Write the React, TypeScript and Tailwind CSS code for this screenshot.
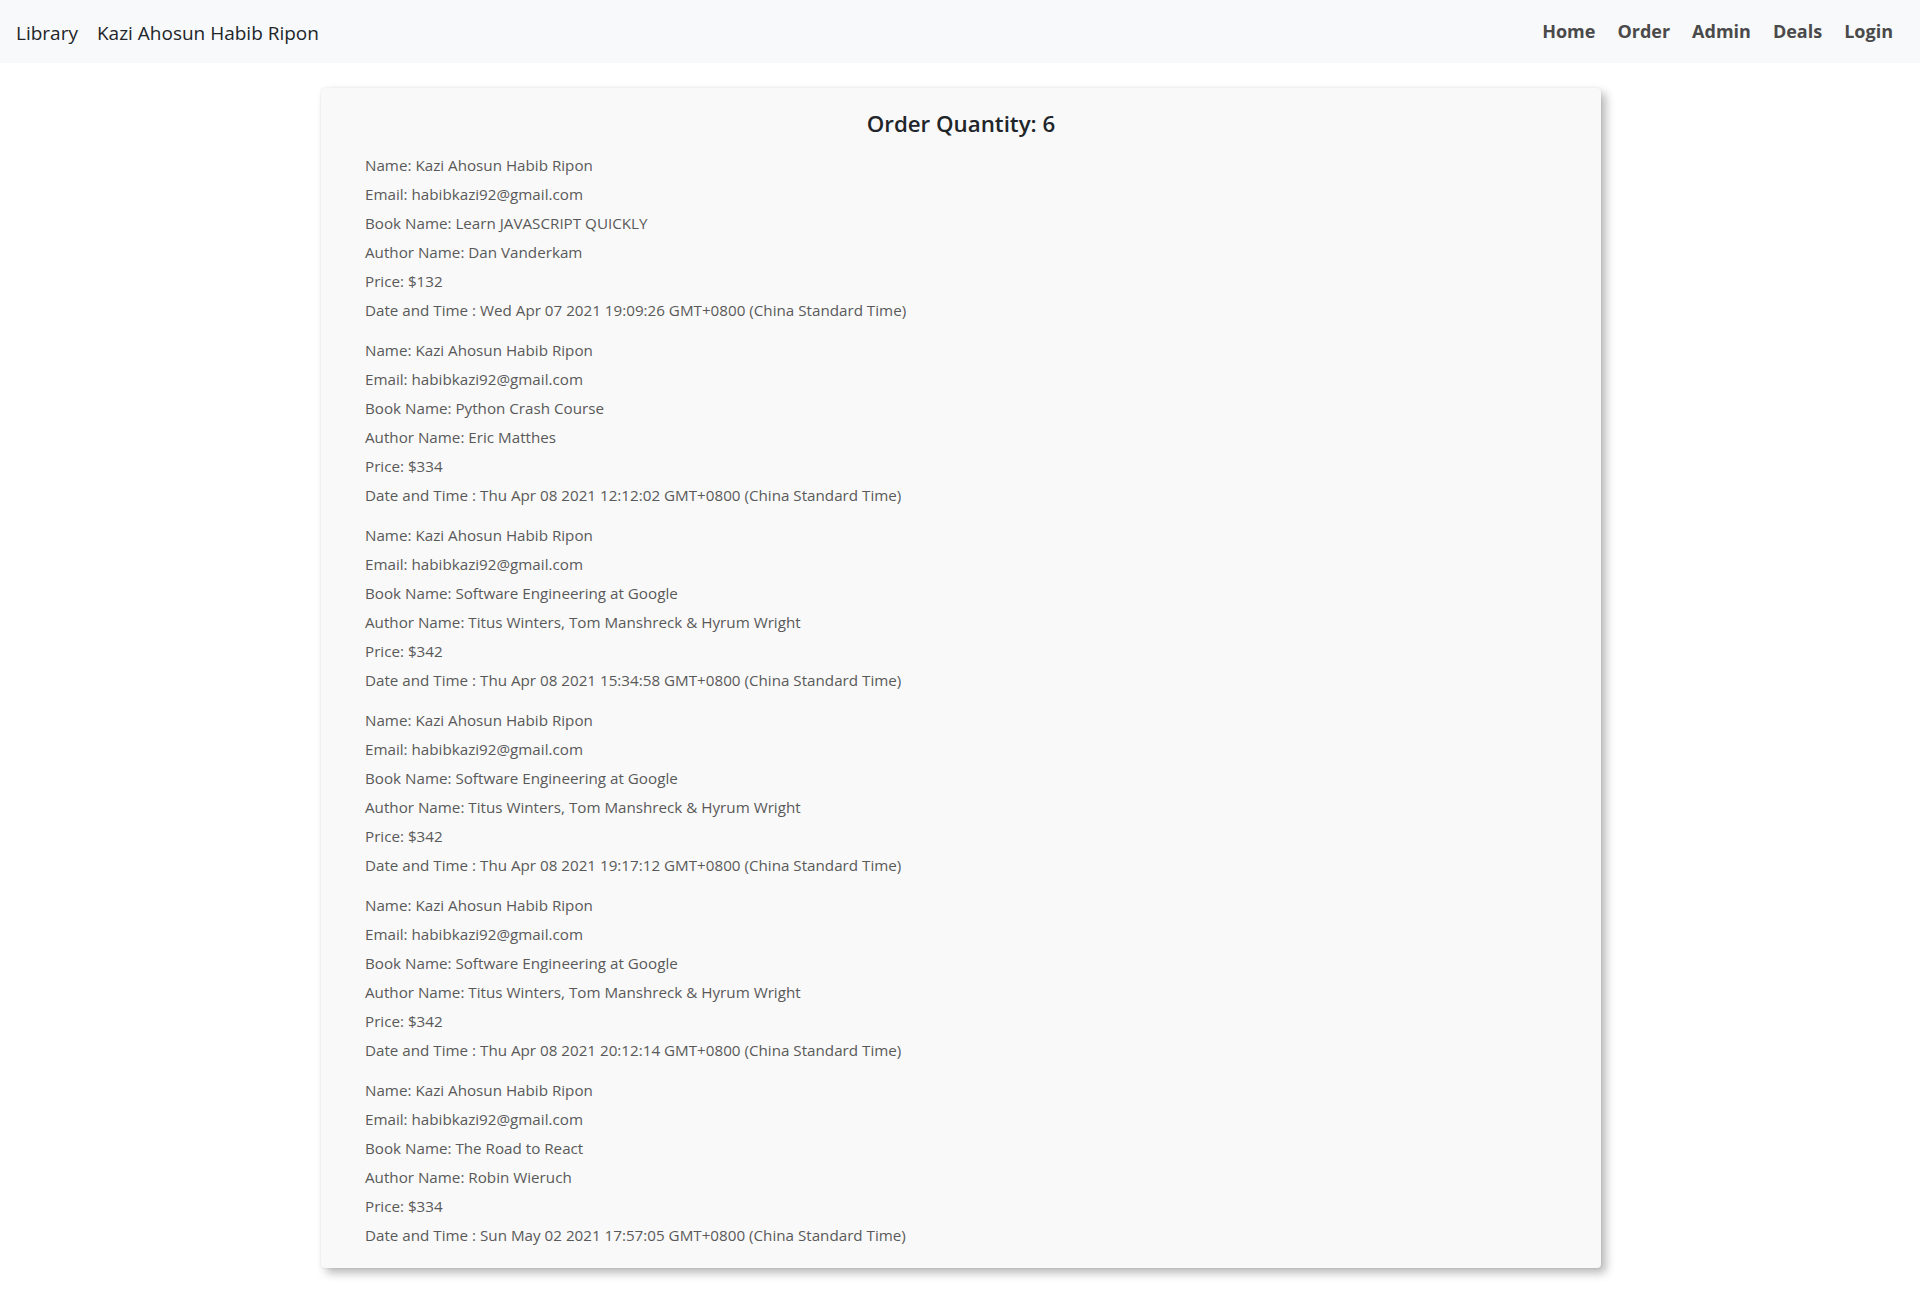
import React from "react";

const orders = [
  { book: "Learn JAVASCRIPT QUICKLY", author: "Dan Vanderkam", price: 132, date: "Wed Apr 07 2021 19:09:26 GMT+0800 (China Standard Time)" },
  { book: "Python Crash Course", author: "Eric Matthes", price: 334, date: "Thu Apr 08 2021 12:12:02 GMT+0800 (China Standard Time)" },
  { book: "Software Engineering at Google", author: "Titus Winters, Tom Manshreck & Hyrum Wright", price: 342, date: "Thu Apr 08 2021 15:34:58 GMT+0800 (China Standard Time)" },
  { book: "Software Engineering at Google", author: "Titus Winters, Tom Manshreck & Hyrum Wright", price: 342, date: "Thu Apr 08 2021 19:17:12 GMT+0800 (China Standard Time)" },
  { book: "Software Engineering at Google", author: "Titus Winters, Tom Manshreck & Hyrum Wright", price: 342, date: "Thu Apr 08 2021 20:12:14 GMT+0800 (China Standard Time)" },
  { book: "The Road to React", author: "Robin Wieruch", price: 334, date: "Sun May 02 2021 17:57:05 GMT+0800 (China Standard Time)" },
];

export default function App() {
  return (
    <div className="min-h-[1293px] bg-white" style={{ fontFamily: '"Open Sans", "Noto Sans", sans-serif' }}>
      <nav className="h-[63px] bg-[#f8f9fa] flex items-center justify-between px-[16px]">
        <div className="flex items-center gap-[19px] text-[19px] text-[#212529] pt-[3px]">
          <span>Library</span>
          <span>Kazi Ahosun Habib Ripon</span>
        </div>
        <div className="flex items-center gap-[22px] text-[18px] font-bold text-[#4a4a4a] pr-[11px]">
          <span>Home</span>
          <span>Order</span>
          <span>Admin</span>
          <span>Deals</span>
          <span>Login</span>
        </div>
      </nav>
      <div className="pt-[25px] pb-[26px]">
        <div className="w-[1280px] ml-[321px] bg-[#f9f9f9] rounded-[4px] shadow-[5px_5px_10px_rgba(0,0,0,0.28),0_0_3px_rgba(0,0,0,0.08)] pt-[18px] pb-[7px] px-[44px]">
          <h4 className="text-center text-[22.3px] font-semibold text-[#212529] leading-[36px] mb-[9px]">Order Quantity: {orders.length}</h4>
          {orders.map((o, i) => (
            <div key={i} className="mb-[11px] text-[15.2px] text-[#595959] leading-[29px]">
              <div>Name: Kazi Ahosun Habib Ripon</div>
              <div>Email: habibkazi92@gmail.com</div>
              <div>Book Name: {o.book}</div>
              <div>Author Name: {o.author}</div>
              <div>Price: ${o.price}</div>
              <div>Date and Time : {o.date}</div>
            </div>
          ))}
        </div>
      </div>
    </div>
  );
}
